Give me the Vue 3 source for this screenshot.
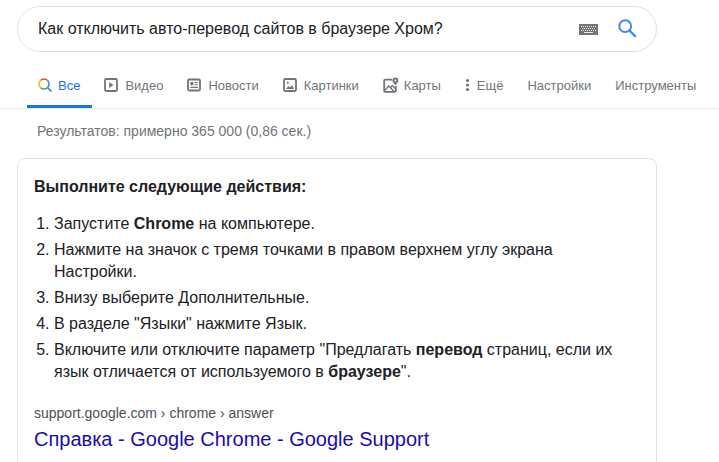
<script setup>
const tabs = [
  { label: "Все", icon: "search", active: true },
  { label: "Видео", icon: "video" },
  { label: "Новости", icon: "news" },
  { label: "Картинки", icon: "image" },
  { label: "Карты", icon: "map" },
  { label: "Ещё", icon: "more" },
];
</script>

<template>
  <div class="page">
    <div class="searchBox">
      <span class="query">Как отключить авто-перевод сайтов в браузере Хром?</span>
      <svg class="keyboard" width="19" height="11" viewBox="0 0 19 11">
        <rect width="19" height="11" fill="#757575" />
        <path
          d="M2 2h1v1H2zM4 2h1v1H4zM6 2h1v1H6zM8 2h1v1H8zM10 2h1v1h-1zM12 2h1v1h-1zM14 2h1v1h-1zM16 2h1v1h-1zM3 4h1v1H3zM5 4h1v1H5zM7 4h1v1H7zM9 4h1v1H9zM11 4h1v1h-1zM13 4h1v1h-1zM15 4h1v1h-1zM2 6h1v1H2zM4 6h1v1H4zM6 6h1v1H6zM8 6h1v1H8zM10 6h1v1h-1zM12 6h1v1h-1zM14 6h1v1h-1zM16 6h1v1h-1zM5 8h9v1H5z"
          fill="#e8e8e8"
        />
      </svg>
      <svg class="searchIcon" width="19" height="19" viewBox="0 0 19 19" fill="none">
        <circle cx="7.2" cy="7.2" r="5.9" stroke="#4285f4" stroke-width="2" />
        <path d="M11.6 11.6l6.2 6.2" stroke="#4285f4" stroke-width="2.2" />
      </svg>
    </div>

    <div class="tabBar">
      <div
        v-for="tab in tabs"
        :key="tab.label"
        :class="['tab', tab.icon, { active: tab.active }]"
      >
        <svg v-if="tab.icon === 'search'" width="14" height="14" viewBox="0 0 14 14" fill="none">
          <path d="M2.46 2.46A5 5 0 0 1 9.54 2.46" stroke="#ea4335" stroke-width="1.6" />
          <path d="M9.54 2.46A5 5 0 0 1 9.54 9.54" stroke="#4285f4" stroke-width="1.6" />
          <path d="M9.54 9.54A5 5 0 0 1 2.46 9.54" stroke="#34a853" stroke-width="1.6" />
          <path d="M2.46 9.54A5 5 0 0 1 2.46 2.46" stroke="#fbbc05" stroke-width="1.6" />
          <path d="M9.8 9.8l3.7 3.7" stroke="#4285f4" stroke-width="1.8" />
        </svg>
        <svg v-else-if="tab.icon === 'video'" width="14" height="14" viewBox="0 0 14 14" fill="none">
          <rect x="1" y="1" width="12" height="12" rx="1.2" stroke="#70757a" stroke-width="1.8" />
          <path d="M5.2 4l4.2 3-4.2 3z" fill="#70757a" />
        </svg>
        <svg v-else-if="tab.icon === 'news'" width="14" height="14" viewBox="0 0 14 14" fill="none">
          <rect x="1" y="1.5" width="12" height="11" rx="1.2" stroke="#70757a" stroke-width="1.8" />
          <path d="M3.3 4h3v3.2h-3z" fill="#70757a" />
          <path d="M7.5 4.5h3.4M7.5 6.7h3.4M3.3 9.4h7.6" stroke="#70757a" stroke-width="1.1" />
        </svg>
        <svg v-else-if="tab.icon === 'image'" width="14" height="14" viewBox="0 0 14 14" fill="none">
          <rect x="1" y="1" width="12" height="12" rx="1.2" stroke="#70757a" stroke-width="1.8" />
          <circle cx="4.8" cy="4.8" r="1.1" fill="#70757a" />
          <path d="M2.8 11l2.6-3 1.6 1.6 2-2.4 2.2 3.8z" fill="#70757a" />
        </svg>
        <svg v-else-if="tab.icon === 'map'" width="16" height="16" viewBox="0 0 16 16" fill="none">
          <path d="M9 2.6H2.2a1 1 0 0 0-1 1v10.2a1 1 0 0 0 1 1h9.6a1 1 0 0 0 1-1V9" stroke="#70757a" stroke-width="1.8" />
          <path d="M2 13.4l3.6-4.4 5.6 5.6M7.4 10.8l2-2.2 2.6 2.8" stroke="#70757a" stroke-width="1.4" />
          <path d="M12.4 0.6a3 3 0 0 1 3 3c0 2-3 4.6-3 4.6s-3-2.6-3-4.6a3 3 0 0 1 3-3z" fill="#70757a" />
          <circle cx="12.4" cy="3.5" r="1" fill="#fff" />
        </svg>
        <svg v-else width="5" height="14" viewBox="0 0 5 14">
          <circle cx="2.5" cy="2.5" r="1.6" fill="#70757a" />
          <circle cx="2.5" cy="7" r="1.6" fill="#70757a" />
          <circle cx="2.5" cy="11.5" r="1.6" fill="#70757a" />
        </svg>
        <span>{{ tab.label }}</span>
      </div>
      <div class="tab plain">Настройки</div>
      <div class="tab plain">Инструменты</div>
    </div>

    <div class="stats">Результатов: примерно 365 000 (0,86 сек.)</div>

    <div class="card">
      <h2>Выполните следующие действия:</h2>
      <ol>
        <li>Запустите <b>Chrome</b> на компьютере.</li>
        <li>Нажмите на значок с тремя точками в правом верхнем углу экрана<br />Настройки.</li>
        <li>Внизу выберите Дополнительные.</li>
        <li>В разделе "Языки" нажмите Язык.</li>
        <li>Включите или отключите параметр "Предлагать <b>перевод</b> страниц, если их язык отличается от используемого в <b>браузере</b>".</li>
      </ol>
      <div class="source">support.google.com › chrome › answer</div>
      <a class="title">Справка - Google Chrome - Google Support</a>
    </div>
  </div>
</template>

<style>
html,
body {
  margin: 0;
  background: #fff;
  overflow: hidden;
}
</style>

<style scoped>
.page {
  width: 719px;
  height: 462px;
  overflow: hidden;
  font-family: "Liberation Sans", Arial, sans-serif;
  color: #202124;
  padding-top: 6px;
  box-sizing: border-box;
}

.searchBox {
  width: 640px;
  height: 46px;
  margin-left: 17px;
  box-sizing: border-box;
  border: 1px solid #dfe1e5;
  border-radius: 23px;
  display: flex;
  align-items: center;
  padding-left: 20px;
}
.query {
  font-size: 16px;
  flex: 1;
}
.keyboard {
  margin-right: 20px;
}
.searchIcon {
  margin-right: 19px;
  margin-top: -1px;
}

.tabBar {
  margin-top: 10px;
  height: 46px;
  padding-left: 27px;
  border-bottom: 1px solid #ebebeb;
  display: flex;
  font-size: 13px;
  color: #70757a;
}
.tab {
  height: 46px;
  box-sizing: border-box;
  padding: 0 11px;
  margin-right: 2px;
  display: flex;
  align-items: center;
  gap: 7px;
  white-space: nowrap;
}
.tab.active {
  color: #1a73e8;
  border-bottom: 3px solid #1a73e8;
  padding: 3px 12px 0 11px;
  margin-right: 1px;
}
.tab.search {
  gap: 6px;
}
.tab.map {
  gap: 5px;
}

.stats {
  font-size: 14px;
  line-height: 16px;
  color: #70757a;
  margin: 14px 0 0 37px;
}

.card {
  width: 640px;
  height: 320px;
  box-sizing: border-box;
  margin: 19px 0 0 17px;
  border: 1px solid #dfe1e5;
  border-radius: 8px;
  padding: 18px 16px 0;
}
h2 {
  margin: 0;
  font-size: 16px;
  line-height: 20px;
  font-weight: 700;
  color: #202124;
}
ol {
  margin: 16px 0 0;
  padding: 0 0 0 20px;
  font-size: 16px;
  line-height: 22px;
  width: 586px;
}
li {
  margin-bottom: 4px;
}
.source {
  margin-top: 21px;
  font-size: 14px;
  line-height: 18px;
  color: #4d5156;
}
.title {
  display: block;
  margin-top: 4px;
  font-size: 20px;
  line-height: 26px;
  color: #1a0dab;
}
</style>
